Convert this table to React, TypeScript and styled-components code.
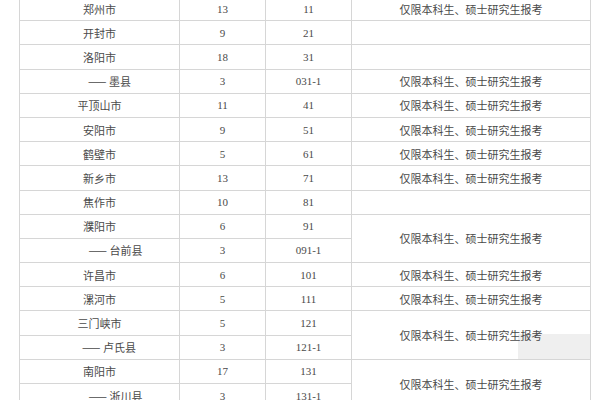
import React from 'react';
import styled, { createGlobalStyle } from 'styled-components';

const NOTE = '仅限本科生、硕士研究生报考';

interface Row {
  city: string;
  indent?: number;
  count: string;
  code: string;
  note?: string;
  span?: number;
  skip?: boolean;
  shade?: boolean;
}

const rows: Row[] = [
  { city: '郑州市', count: '13', code: '11', note: NOTE },
  { city: '开封市', count: '9', code: '21', note: '' },
  { city: '洛阳市', count: '18', code: '31', note: '' },
  { city: '—— 墨县', indent: 20, count: '3', code: '031-1', note: NOTE },
  { city: '平顶山市', count: '11', code: '41', note: NOTE },
  { city: '安阳市', count: '9', code: '51', note: NOTE },
  { city: '鹤壁市', count: '5', code: '61', note: NOTE },
  { city: '新乡市', count: '13', code: '71', note: NOTE },
  { city: '焦作市', count: '10', code: '81', note: '' },
  { city: '濮阳市', count: '6', code: '91', note: NOTE, span: 2 },
  { city: '—— 台前县', indent: 32, count: '3', code: '091-1', skip: true },
  { city: '许昌市', count: '6', code: '101', note: NOTE },
  { city: '漯河市', count: '5', code: '111', note: NOTE },
  { city: '三门峡市', count: '5', code: '121', note: NOTE, span: 2, shade: true },
  { city: '—— 卢氏县', indent: 19, count: '3', code: '121-1', skip: true },
  { city: '南阳市', count: '17', code: '131', note: NOTE, span: 2 },
  { city: '—— 淅川县', indent: 32, count: '3', code: '131-1', skip: true },
];

const GlobalStyle = createGlobalStyle`
  html, body {
    margin: 0;
    padding: 0;
    background: #ffffff;
    overflow: hidden;
  }
`;

const Page = styled.div`
  width: 600px;
  height: 400px;
  overflow: hidden;
  padding-left: 19px;
  box-sizing: border-box;
`;

const Table = styled.table`
  margin-top: -4px;
  width: 571px;
  border-collapse: collapse;
  table-layout: fixed;
  color: #4a4a4a;
  font-size: 11px;
`;

const Tr = styled.tr`
  height: 24.2px;
`;

const Cell = styled.td<{ $serif?: boolean }>`
  border: 1px solid #d6d6d6;
  padding: 0;
  text-align: center;
  vertical-align: middle;
  font-family: ${({ $serif }) =>
    $serif ? '"Liberation Serif", "Noto Sans CJK SC", serif' : '"Noto Sans CJK SC", sans-serif'};
  line-height: 14px;
  white-space: nowrap;
`;

const CityCell = styled(Cell)<{ $indent?: number }>`
  padding-left: ${({ $indent }) => $indent || 0}px;
`;

const NoteCell = styled(Cell)`
  position: relative;
`;

const NoteText = styled.span`
  position: relative;
  z-index: 1;
`;

const Shade = styled.div`
  position: absolute;
  right: 0;
  bottom: 0;
  width: 72px;
  height: 25px;
  background: #efefef;
`;

export default function App() {
  return (
    <Page>
      <GlobalStyle />
      <Table>
        <colgroup>
          <col style={{ width: 160 }} />
          <col style={{ width: 86 }} />
          <col style={{ width: 86 }} />
          <col style={{ width: 239 }} />
        </colgroup>
        <tbody>
          {rows.map((r) => (
            <Tr key={r.code}>
              <CityCell $indent={r.indent}>{r.city}</CityCell>
              <Cell $serif>{r.count}</Cell>
              <Cell $serif>{r.code}</Cell>
              {!r.skip && (
                <NoteCell rowSpan={r.span || 1}>
                  {r.shade && <Shade />}
                  <NoteText>{r.note}</NoteText>
                </NoteCell>
              )}
            </Tr>
          ))}
        </tbody>
      </Table>
    </Page>
  );
}
